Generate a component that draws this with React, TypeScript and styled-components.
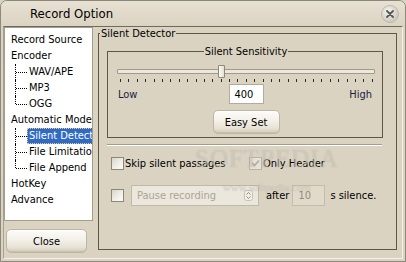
import React from 'react';
import styled, { createGlobalStyle } from 'styled-components';

const ui = `"DejaVu Sans Condensed", "DejaVu Sans", sans-serif`;

const colors = {
  face: '#dbd3c2',
  frame: '#8d887b',
  groupLine: '#5f5646',
  treeBorder: '#a39d8c',
  select: '#316ac5',
  disabledText: '#aaa593',
};

const GlobalStyle = createGlobalStyle`
  html, body {
    margin: 0;
    padding: 0;
    background: ${colors.face};
  }
  * {
    box-sizing: border-box;
  }
`;

const Window = styled.div`
  position: relative;
  width: 406px;
  height: 262px;
  display: flex;
  flex-direction: column;
  background: ${colors.face};
  border: 1px solid ${colors.frame};
  border-radius: 7px 7px 0 0;
  overflow: hidden;
  font-family: ${ui};
  font-size: 11px;
  color: #000;
`;

const TitleBar = styled.div`
  height: 25px;
  flex-shrink: 0;
  display: flex;
  align-items: center;
  justify-content: space-between;
  padding: 0 6px 0 29px;
  background: linear-gradient(#e7e1d3, ${colors.face});
  font-size: 13px;
`;

const CloseCircle = styled.button`
  width: 18px;
  height: 18px;
  padding: 0;
  border: 1px solid #bcb8ae;
  border-radius: 50%;
  background: radial-gradient(circle at 40% 35%, #f6f5f2, #cfccc4 70%, #bdb9ae);
  display: flex;
  align-items: center;
  justify-content: center;
`;

const Body = styled.div`
  flex: 1;
  display: flex;
  margin: 0 2px 2px 2px;
  border-top: 1px solid #6f6a5d;
  border-left: 1px solid #a8a293;
  border-right: 1px solid #f3f0e8;
  border-bottom: 1px solid #f3f0e8;
`;

const SideColumn = styled.div`
  width: 89px;
  display: flex;
  flex-direction: column;
`;

const Tree = styled.div`
  height: 194px;
  background: #fff;
  border: 1px solid ${colors.treeBorder};
  padding: 4px 0 0 4px;
  overflow: hidden;
`;

const TreeRow = styled.div`
  height: 16px;
  display: flex;
  align-items: center;
  white-space: nowrap;
`;

const ChildRow = styled.div<{ $last?: boolean }>`
  position: relative;
  height: 16px;
  display: flex;
  align-items: center;
  padding-left: 22px;
  margin-left: -4px;
  white-space: nowrap;

  &::before {
    content: '';
    position: absolute;
    left: 10px;
    top: 0;
    height: ${(p) => (p.$last ? '8px' : '16px')};
    border-left: 1px dotted #000;
  }

  &::after {
    content: '';
    position: absolute;
    left: 11px;
    top: 8px;
    width: 11px;
    border-top: 1px dotted #000;
  }
`;

const ItemLabel = styled.span<{ $selected?: boolean }>`
  height: 16px;
  line-height: 16px;
  padding: 0 2px;
  background: ${(p) => (p.$selected ? colors.select : 'transparent')};
  color: ${(p) => (p.$selected ? '#fff' : '#000')};
  outline: ${(p) => (p.$selected ? '1px dotted #e9cf86' : 'none')};
  outline-offset: -1px;
`;

const SkinButton = styled.button<{ $width: number }>`
  width: ${(p) => p.$width}px;
  height: 24px;
  padding: 0;
  border: 1px solid #bdb6a4;
  border-radius: 5px;
  background: linear-gradient(#fdfcf9 0%, #f3f0e8 45%, #e6e1d4 80%, #d2cab7 100%);
  box-shadow: inset 0 1px 0 #fff, inset 0 -1px 0 #c9c1ad;
  font-family: ${ui};
  font-size: 11px;
  color: #000;
`;

const CloseButton = styled(SkinButton)`
  margin: 8px 0 0 2px;
`;

const MainColumn = styled.div`
  flex: 1;
  padding: 0 5px 8px 5px;
  display: flex;
`;

const Group = styled.fieldset`
  flex: 1;
  margin: 0;
  padding: 0 13px 0 8px;
  border: 1px solid ${colors.groupLine};
  min-width: 0;
`;

const GroupLegend = styled.legend<{ $center?: boolean }>`
  padding: 0 1px;
  margin: ${(p) => (p.$center ? '0 auto' : '0 0 0 -7px')};
  line-height: 13px;
  font-size: 11px;
`;

const SubGroup = styled.fieldset`
  margin: 5px 0 0 0;
  padding: 0 7px 3px 9px;
  border: 1px solid ${colors.groupLine};
  min-width: 0;
  display: flex;
  flex-direction: column;
  align-items: center;
`;

const SliderBox = styled.div`
  position: relative;
  width: 100%;
  height: 13px;
  margin-top: 7px;
  display: flex;
  align-items: center;
`;

const Track = styled.div`
  width: 100%;
  height: 5px;
  margin-top: -1px;
  border: 1px solid #a09a89;
  border-radius: 1px;
  background: #ece8de;
`;

const Thumb = styled.div`
  position: absolute;
  top: 0;
  width: 7px;
  height: 13px;
  margin-left: -3px;
  border: 1px solid #8e8877;
  border-radius: 1px;
  background: linear-gradient(90deg, #fbfaf7, #e4e0d5);
`;

const Ticks = styled.div`
  width: 100%;
  height: 3px;
  margin-top: 1px;
  padding: 0 2px 0 3px;
  display: flex;
  justify-content: space-between;
`;

const Tick = styled.span`
  width: 1px;
  height: 3px;
  background: #2c2a24;
`;

const ScaleRow = styled.div`
  width: 100%;
  margin-top: 2px;
  display: grid;
  grid-template-columns: 1fr auto 1fr;
  align-items: center;
`;

const ScaleLabel = styled.span<{ $end?: boolean }>`
  justify-self: ${(p) => (p.$end ? 'end' : 'start')};
  padding: ${(p) => (p.$end ? '0 3px 0 0' : '0 0 0 1px')};
  color: #1a1c40;
`;

const NumberBox = styled.div<{ $width: number; $disabled?: boolean }>`
  width: ${(p) => p.$width}px;
  height: ${(p) => (p.$disabled ? 21 : 20)}px;
  margin-left: ${(p) => (p.$disabled ? 3 : 0)}px;
  display: flex;
  align-items: center;
  padding-left: 5px;
  border: 1px solid ${(p) => (p.$disabled ? '#c2bcaa' : '#b2ac9a')};
  background: ${(p) => (p.$disabled ? '#e1dacb' : '#fff')};
  color: ${(p) => (p.$disabled ? '#8f8a7b' : '#000')};
`;

const EasySet = styled(SkinButton)`
  margin-top: 6px;
`;

const Separator = styled.div`
  height: 2px;
  margin-top: 6px;
  margin-right: 1px;
  border-top: 1px solid #a29c8b;
  border-bottom: 1px solid #fff;
`;

const OptionRow = styled.div<{ $top: number }>`
  display: flex;
  align-items: center;
  margin-top: ${(p) => p.$top}px;
  padding-left: 4px;
  white-space: nowrap;
`;

const CheckItem = styled.label<{ $width?: number }>`
  display: flex;
  align-items: center;
  gap: 1px;
  width: ${(p) => (p.$width ? `${p.$width}px` : 'auto')};
`;

const CheckBox = styled.span<{ $disabled?: boolean }>`
  width: 13px;
  height: 13px;
  flex-shrink: 0;
  display: flex;
  align-items: center;
  justify-content: center;
  border: 1px solid ${(p) => (p.$disabled ? '#b9b3a2' : '#8d8775')};
  background: ${(p) =>
    p.$disabled
      ? '#e6e2d8'
      : 'linear-gradient(135deg, #d9d4c8 0%, #f1efe9 55%, #fbfbf9 100%)'};
`;

const Combo = styled.div`
  width: 128px;
  height: 21px;
  margin-left: 7px;
  display: flex;
  align-items: center;
  justify-content: space-between;
  padding: 0 5px 0 5px;
  border: 1px solid #bfb9a7;
  background: #ebe7dc;
  color: ${colors.disabledText};
`;

const Word = styled.span<{ $left: number }>`
  margin-left: ${(p) => p.$left}px;
`;

const Watermark = styled.div`
  position: absolute;
  left: 194px;
  top: 145px;
  pointer-events: none;
  display: flex;
  flex-direction: column;
  align-items: center;
  font-family: "Liberation Serif", serif;
  color: rgba(255, 255, 255, 0.4);
  text-shadow: 0 0 1px rgba(100, 90, 70, 0.4);
`;

const WatermarkBig = styled.span`
  font-size: 25px;
  letter-spacing: 1px;
  line-height: 26px;
`;

const WatermarkSmall = styled.span`
  font-size: 11px;
  line-height: 12px;
  margin-top: 9px;
`;

type Node = { label: string; children?: string[] };

const tree: Node[] = [
  { label: 'Record Source' },
  { label: 'Encoder', children: ['WAV/APE', 'MP3', 'OGG'] },
  { label: 'Automatic Mode', children: ['Silent Detect', 'File Limitation', 'File Append'] },
  { label: 'HotKey' },
  { label: 'Advance' },
];

const App: React.FC = () => {
  const sliderValue = 400;
  const tickCount = 31;

  return (
    <>
      <GlobalStyle />
      <Window>
        <TitleBar>
          <span>Record Option</span>
          <CloseCircle>
            <svg width="8" height="8" viewBox="0 0 8 8">
              <path d="M1 1 L7 7 M7 1 L1 7" stroke="#5b5950" strokeWidth="1.8" strokeLinecap="round" />
            </svg>
          </CloseCircle>
        </TitleBar>

        <Body>
          <SideColumn>
            <Tree>
              {tree.map((node) => (
                <React.Fragment key={node.label}>
                  <TreeRow>
                    <ItemLabel>{node.label}</ItemLabel>
                  </TreeRow>
                  {node.children?.map((child, i, list) => (
                    <ChildRow key={child} $last={i === list.length - 1}>
                      <ItemLabel $selected={child === 'Silent Detect'}>{child}</ItemLabel>
                    </ChildRow>
                  ))}
                </React.Fragment>
              ))}
            </Tree>
            <CloseButton $width={81}>Close</CloseButton>
          </SideColumn>

          <MainColumn>
            <Group>
              <GroupLegend>Silent Detector</GroupLegend>

              <SubGroup>
                <GroupLegend $center>Silent Sensitivity</GroupLegend>
                <SliderBox>
                  <Track />
                  <Thumb style={{ left: `${3 + (sliderValue / 1000) * 252}px` }} />
                </SliderBox>
                <Ticks>
                  {Array.from({ length: tickCount }).map((_, i) => (
                    <Tick key={i} />
                  ))}
                </Ticks>
                <ScaleRow>
                  <ScaleLabel>Low</ScaleLabel>
                  <NumberBox $width={35}>400</NumberBox>
                  <ScaleLabel $end>High</ScaleLabel>
                </ScaleRow>
                <EasySet $width={67}>Easy Set</EasySet>
              </SubGroup>

              <Separator />

              <OptionRow $top={11}>
                <CheckItem $width={138}>
                  <CheckBox />
                  <span>Skip silent passages</span>
                </CheckItem>
                <CheckItem>
                  <CheckBox $disabled>
                    <svg width="9" height="9" viewBox="0 0 9 9">
                      <path d="M1 4 L3.5 6.5 L8 1.5" fill="none" stroke="#b3ad9c" strokeWidth="1.8" />
                    </svg>
                  </CheckBox>
                  <span>Only Header</span>
                </CheckItem>
              </OptionRow>

              <OptionRow $top={15}>
                <CheckBox />
                <Combo>
                  <span>Pause recording</span>
                  <svg width="9" height="11" viewBox="0 0 9 11">
                    <rect x="0.5" y="0.5" width="8" height="10" rx="2" fill="#f2efe7" stroke="#c8c2b1" />
                    <path d="M2.5 4.5 L4.5 2.5 L6.5 4.5 M2.5 6.5 L4.5 8.5 L6.5 6.5" fill="none" stroke="#8f8a7b" strokeWidth="1" />
                  </svg>
                </Combo>
                <Word $left={7}>after</Word>
                <NumberBox $width={33} $disabled>10</NumberBox>
                <Word $left={5}>s silence.</Word>
              </OptionRow>
            </Group>
          </MainColumn>
        </Body>

        <Watermark>
          <WatermarkBig>SOFTPEDIA</WatermarkBig>
          <WatermarkSmall>www.softpedia.com</WatermarkSmall>
        </Watermark>
      </Window>
    </>
  );
};

export default App;
